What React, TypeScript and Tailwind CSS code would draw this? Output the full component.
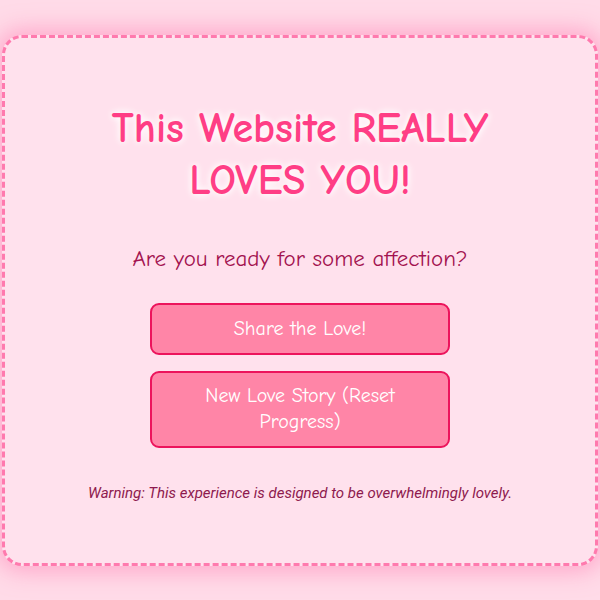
import React from "react";

export default function App() {
  return (
    <div className="min-h-screen w-full bg-[#ffdbe8] flex items-center justify-center font-['Comic_Sans_MS','Comic_Neue',cursive]">
      <div className="w-[596px] h-[531px] rounded-[20px] border-[3px] border-dashed border-[#ff7aae] bg-[#ffe1ed] shadow-[0_0_22px_6px_rgba(255,130,180,0.55)] flex flex-col items-center pt-[65px]">
        <h1 className="w-[440px] text-center text-[42px] leading-[52px] font-bold text-[#ff3e85] [text-shadow:0_0_6px_#fff,0_0_10px_#fff]">
          This Website REALLY LOVES YOU!
        </h1>

        <p className="mt-[37px] text-[23px] leading-[30px] text-[#a3124f]">
          Are you ready for some affection?
        </p>

        <div className="mt-[29px] flex flex-col gap-4 w-[300px]">
          <button className="h-[52px] rounded-[9px] border-2 border-[#ec145c] bg-[#ff85a7] text-white text-[20px] leading-[26px] px-[30px]">
            Share the Love!
          </button>
          <button className="h-[77px] rounded-[9px] border-2 border-[#ec145c] bg-[#ff85a7] text-white text-[20px] leading-[26px] px-[40px]">
            New Love Story (Reset Progress)
          </button>
        </div>

        <p className="mt-[35px] text-[15px] leading-[20px] italic text-[#8e1a4e] font-['Roboto',sans-serif]">
          Warning: This experience is designed to be overwhelmingly lovely.
        </p>
      </div>
    </div>
  );
}
